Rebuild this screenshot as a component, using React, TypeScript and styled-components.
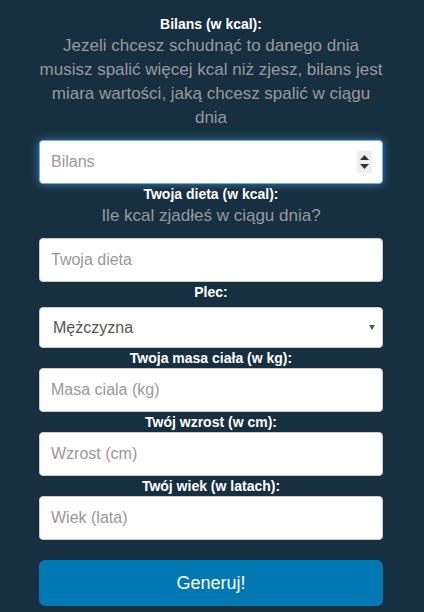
import React from "react";
import styled, { createGlobalStyle, css } from "styled-components";

const Global = createGlobalStyle`
  html, body {
    margin: 0;
    padding: 0;
    background: #163041;
  }
  body {
    font-family: "Liberation Sans", Arial, Helvetica, sans-serif;
    -webkit-font-smoothing: antialiased;
  }
  * { box-sizing: border-box; }
`;

const Page = styled.div`
  width: 424px;
  min-height: 612px;
  background: #163041;
  padding: 14px 41px 0 39px;
`;

const Form = styled.form`
  display: flex;
  flex-direction: column;
  width: 344px;
`;

const Label = styled.label<{ $gap?: number }>`
  display: block;
  height: 20px;
  line-height: 20px;
  font-size: 14px;
  font-weight: bold;
  color: #ffffff;
  text-align: center;
  margin-bottom: ${(p) => p.$gap ?? 0}px;
`;

const Desc = styled.p`
  margin: 0 -2px 10px;
  font-size: 17px;
  line-height: 24px;
  color: #9a9a9a;
  text-align: center;
`;

const fieldBase = css`
  display: block;
  width: 100%;
  border: 1px solid #cccccc;
  border-radius: 4px;
  background: #ffffff;
  font-family: "Liberation Sans", Arial, Helvetica, sans-serif;
  font-size: 16px;
  color: #555555;
  outline: none;
  margin: 0;
  &::placeholder {
    color: #999999;
  }
`;

const InputWrap = styled.div`
  position: relative;
`;

const Input = styled.input<{ $focused?: boolean }>`
  ${fieldBase};
  height: 44px;
  padding: 0 11px;
  ${(p) =>
    p.$focused &&
    css`
      border-color: #66afe9;
      box-shadow: 0 0 8px rgba(102, 175, 233, 0.6);
    `}
  &::-webkit-inner-spin-button,
  &::-webkit-outer-spin-button {
    -webkit-appearance: none;
    margin: 0;
  }
`;

const Spinner = styled.div`
  position: absolute;
  right: 11px;
  top: 11px;
  width: 15px;
  height: 22px;
  background: #eeeeee;
  display: flex;
  flex-direction: column;
  align-items: center;
  justify-content: center;
  gap: 4px;
  pointer-events: none;
`;

const Select = styled.select`
  ${fieldBase};
  appearance: none;
  -webkit-appearance: none;
  height: 41px;
  padding: 0 12px 0 13px;
  color: #555555;
`;

const SelectArrow = styled.span`
  position: absolute;
  right: 8px;
  top: 18px;
  width: 0;
  height: 0;
  border-left: 3px solid transparent;
  border-right: 3px solid transparent;
  border-top: 5px solid #555555;
  pointer-events: none;
`;

const Button = styled.button`
  display: block;
  width: 100%;
  height: 46px;
  margin-top: 20px;
  border: none;
  border-radius: 6px;
  background: #0079b3;
  color: #ffffff;
  font-family: "Liberation Sans", Arial, Helvetica, sans-serif;
  font-size: 18px;
  cursor: pointer;
`;

const Arrow: React.FC<{ up?: boolean }> = ({ up }) => (
  <svg width="9" height="5" viewBox="0 0 9 5">
    {up ? (
      <polygon points="4.5,0 9,5 0,5" fill="#333" />
    ) : (
      <polygon points="0,0 9,0 4.5,5" fill="#333" />
    )}
  </svg>
);

export default function App() {
  return (
    <>
      <Global />
      <Page>
        <Form onSubmit={(e) => e.preventDefault()}>
          <Label>Bilans (w kcal):</Label>
          <Desc>
            Jezeli chcesz schudnąć to danego dnia musisz spalić więcej kcal niż
            zjesz, bilans jest miara wartości, jaką chcesz spalić w ciągu dnia
          </Desc>
          <InputWrap>
            <Input type="number" placeholder="Bilans" $focused autoFocus />
            <Spinner>
              <Arrow up />
              <Arrow />
            </Spinner>
          </InputWrap>

          <Label>Twoja dieta (w kcal):</Label>
          <Desc>Ile kcal zjadłeś w ciągu dnia?</Desc>
          <Input type="number" placeholder="Twoja dieta" />

          <Label $gap={5}>Plec:</Label>
          <InputWrap>
            <Select defaultValue="m">
              <option value="m">Mężczyzna</option>
              <option value="k">Kobieta</option>
            </Select>
            <SelectArrow />
          </InputWrap>

          <Label>Twoja masa ciała (w kg):</Label>
          <Input type="number" placeholder="Masa ciala (kg)" />

          <Label>Twój wzrost (w cm):</Label>
          <Input type="number" placeholder="Wzrost (cm)" />

          <Label>Twój wiek (w latach):</Label>
          <Input type="number" placeholder="Wiek (lata)" />

          <Button type="submit">Generuj!</Button>
        </Form>
      </Page>
    </>
  );
}
